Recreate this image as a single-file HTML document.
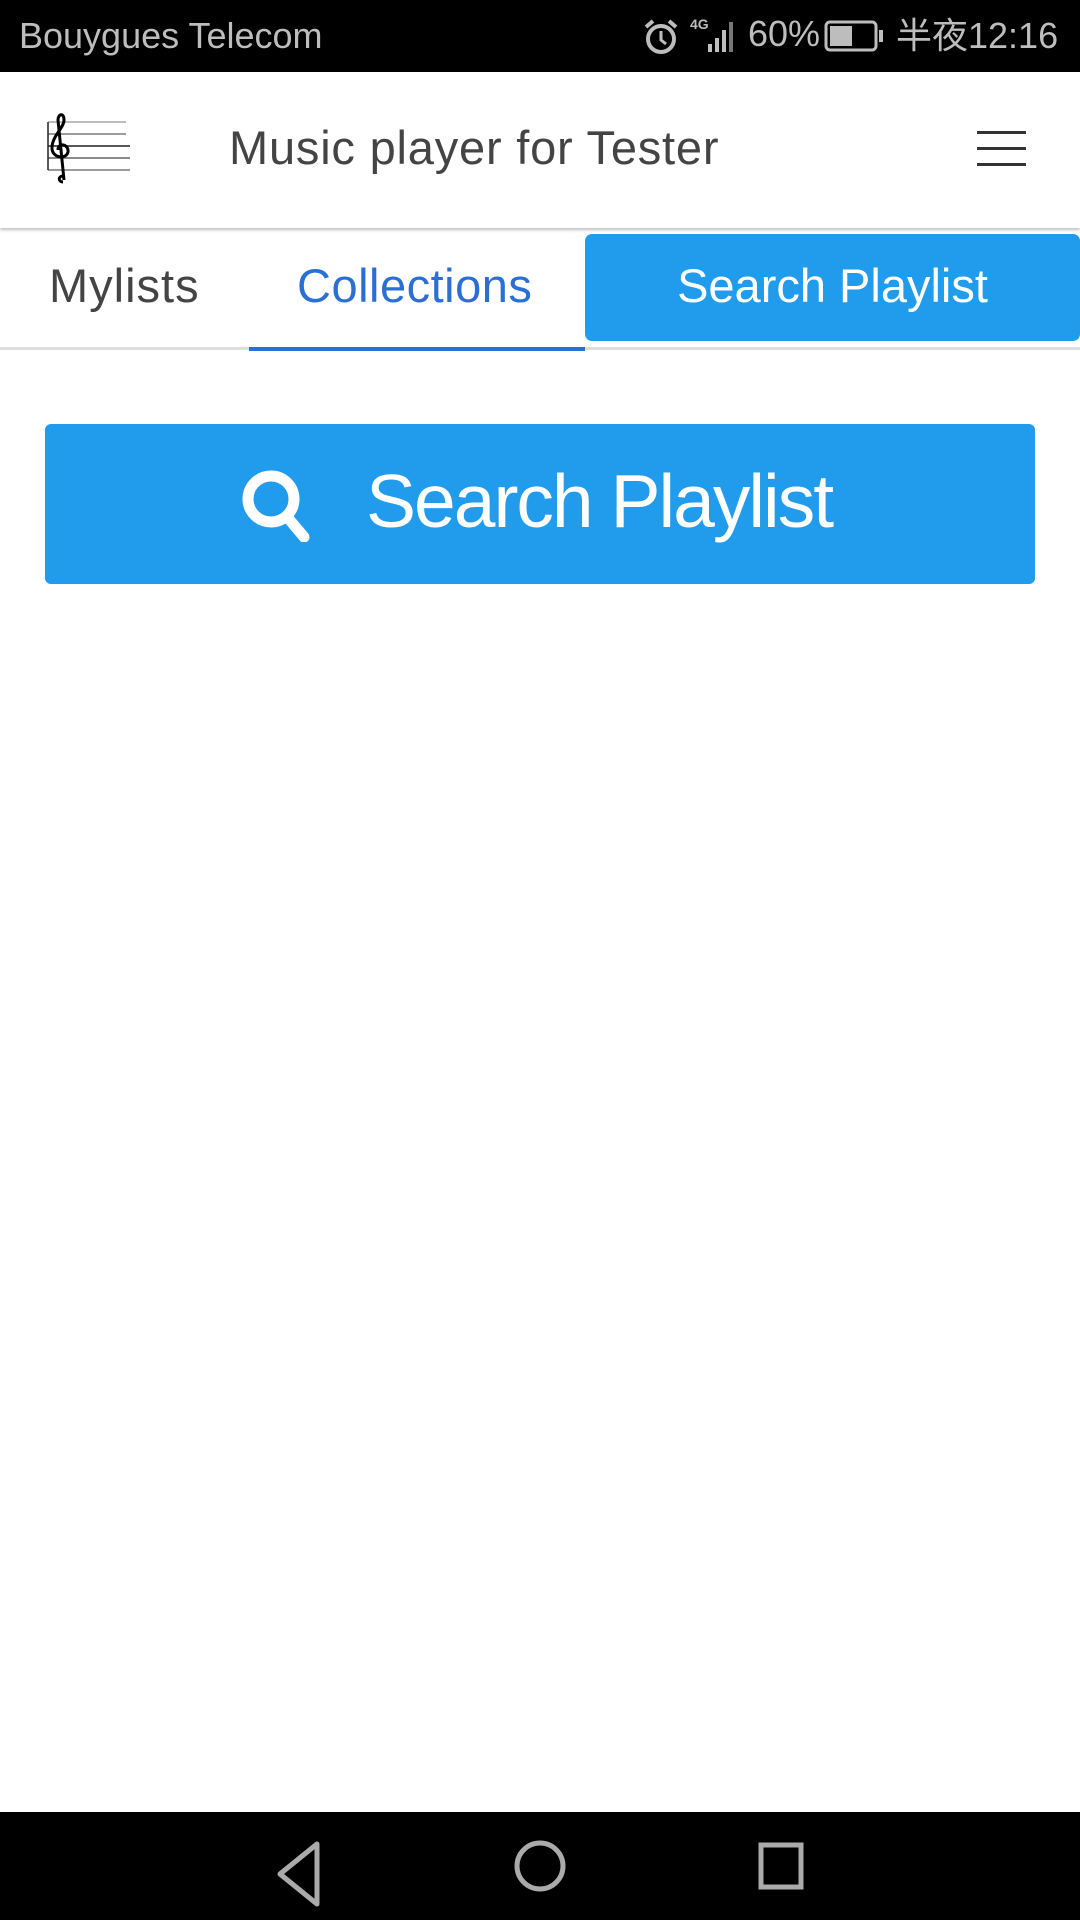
<!DOCTYPE html>
<html><head><meta charset="utf-8"><style>
*{margin:0;padding:0;box-sizing:border-box}
body{width:1080px;height:1920px;background:#fff;position:relative;overflow:hidden;font-family:"Liberation Sans","Noto Sans CJK SC",sans-serif}
.abs{position:absolute}
</style></head><body>
<div class="abs" style="left:0;top:0;width:1080px;height:72px;background:#000"></div>
<div class="abs" style="left:19px;top:16px;font-size:36px;color:#bdbdbd;line-height:40px">Bouygues Telecom</div>
<svg class="abs" style="left:643px;top:18px" width="36" height="38" viewBox="0 0 36 38"><circle cx="18" cy="21" r="13" fill="none" stroke="#bdbdbd" stroke-width="4"/><path d="M18 13v9l5 4" stroke="#bdbdbd" stroke-width="3" fill="none"/><path d="M3 9l7-6M33 9l-7-6" stroke="#bdbdbd" stroke-width="4"/></svg>
<div class="abs" style="left:690px;top:16px;font-size:14px;color:#bdbdbd;font-weight:bold">4G</div>
<svg class="abs" style="left:690px;top:18px" width="50" height="36"><rect x="18" y="26" width="4" height="8" fill="#bdbdbd"/><rect x="25" y="20" width="4" height="14" fill="#bdbdbd"/><rect x="32" y="12" width="4" height="22" fill="#bdbdbd"/><rect x="39" y="4" width="4" height="30" fill="#777"/></svg>
<div class="abs" style="left:748px;top:14px;font-size:36px;color:#bdbdbd;line-height:40px">60%</div>
<svg class="abs" style="left:824px;top:20px" width="62" height="32"><rect x="2" y="2" width="50" height="28" rx="4" fill="none" stroke="#bdbdbd" stroke-width="3"/><rect x="6" y="6" width="22" height="20" fill="#bdbdbd"/><rect x="55" y="10" width="4" height="12" fill="#bdbdbd"/></svg>
<div class="abs" style="left:896px;top:14px;font-size:36px;color:#bdbdbd;line-height:44px">半夜12:16</div>

<div class="abs" style="left:0;top:72px;width:1080px;height:156px;background:#fff;box-shadow:0 2px 3px rgba(0,0,0,.25)"></div>
<svg class="abs" style="left:46px;top:112px" width="90" height="76" viewBox="0 0 90 76"><g stroke="#222" stroke-width="1.5"><line x1="2" y1="10" x2="2" y2="58"/><line x1="2" y1="10" x2="80" y2="10" stroke-opacity=".4"/><line x1="2" y1="22" x2="80" y2="22" stroke-opacity=".6"/><line x1="2" y1="34" x2="84" y2="34"/><line x1="2" y1="46" x2="84" y2="46" stroke-opacity=".7"/><line x1="2" y1="58" x2="84" y2="58" stroke-opacity=".6"/></g><path d="M17 70c-5 0-5-6 0-6M18 68L12 8c0-6 6-8 6 0 0 8-12 16-12 28 0 10 14 12 16 4 1-8-10-10-10-2" stroke="#000" stroke-width="3" fill="none"/></svg>
<div class="abs" style="left:229px;top:120px;font-size:47px;color:#444;line-height:56px;letter-spacing:0.8px">Music player for Tester</div>
<div class="abs" style="left:977px;top:131px;width:49px;height:3px;background:#333"></div>
<div class="abs" style="left:977px;top:147px;width:49px;height:3px;background:#333"></div>
<div class="abs" style="left:977px;top:163px;width:49px;height:3px;background:#333"></div>

<div class="abs" style="left:0;top:347px;width:1080px;height:3px;background:#ddd"></div>
<div class="abs" style="left:249px;top:347px;width:336px;height:4px;background:#2a6fd6"></div>
<div class="abs" style="left:49px;top:258px;font-size:47px;color:#444;line-height:56px;letter-spacing:1px">Mylists</div>
<div class="abs" style="left:297px;top:258px;font-size:47px;color:#2a6fd6;line-height:56px;letter-spacing:0.5px">Collections</div>
<div class="abs" style="left:585px;top:234px;width:495px;height:107px;background:#219bec;border-radius:7px"></div>
<div class="abs" style="left:585px;top:258px;width:495px;text-align:center;font-size:47px;color:#fff;line-height:56px">Search Playlist</div>

<div class="abs" style="left:45px;top:424px;width:990px;height:160px;background:#219bec;border-radius:6px"></div>
<svg class="abs" style="left:242px;top:470px" width="72" height="72" viewBox="0 0 72 72"><circle cx="29" cy="29" r="23" fill="none" stroke="#fff" stroke-width="11"/><path d="M46 48l16 19" stroke="#fff" stroke-width="11" stroke-linecap="round"/></svg>
<div class="abs" style="left:366px;top:458px;font-size:75px;color:#fff;line-height:86px;letter-spacing:-2px">Search Playlist</div>

<div class="abs" style="left:0;top:1812px;width:1080px;height:108px;background:#000"></div>
<svg class="abs" style="left:0;top:1812px" width="1080" height="108"><path d="M317 32L280 62l37 30z" fill="none" stroke="#aaa" stroke-width="5" stroke-linejoin="round"/><circle cx="540" cy="54" r="23" fill="none" stroke="#aaa" stroke-width="5"/><rect x="761" y="33" width="40" height="42" fill="none" stroke="#aaa" stroke-width="5"/></svg>
</body></html>
